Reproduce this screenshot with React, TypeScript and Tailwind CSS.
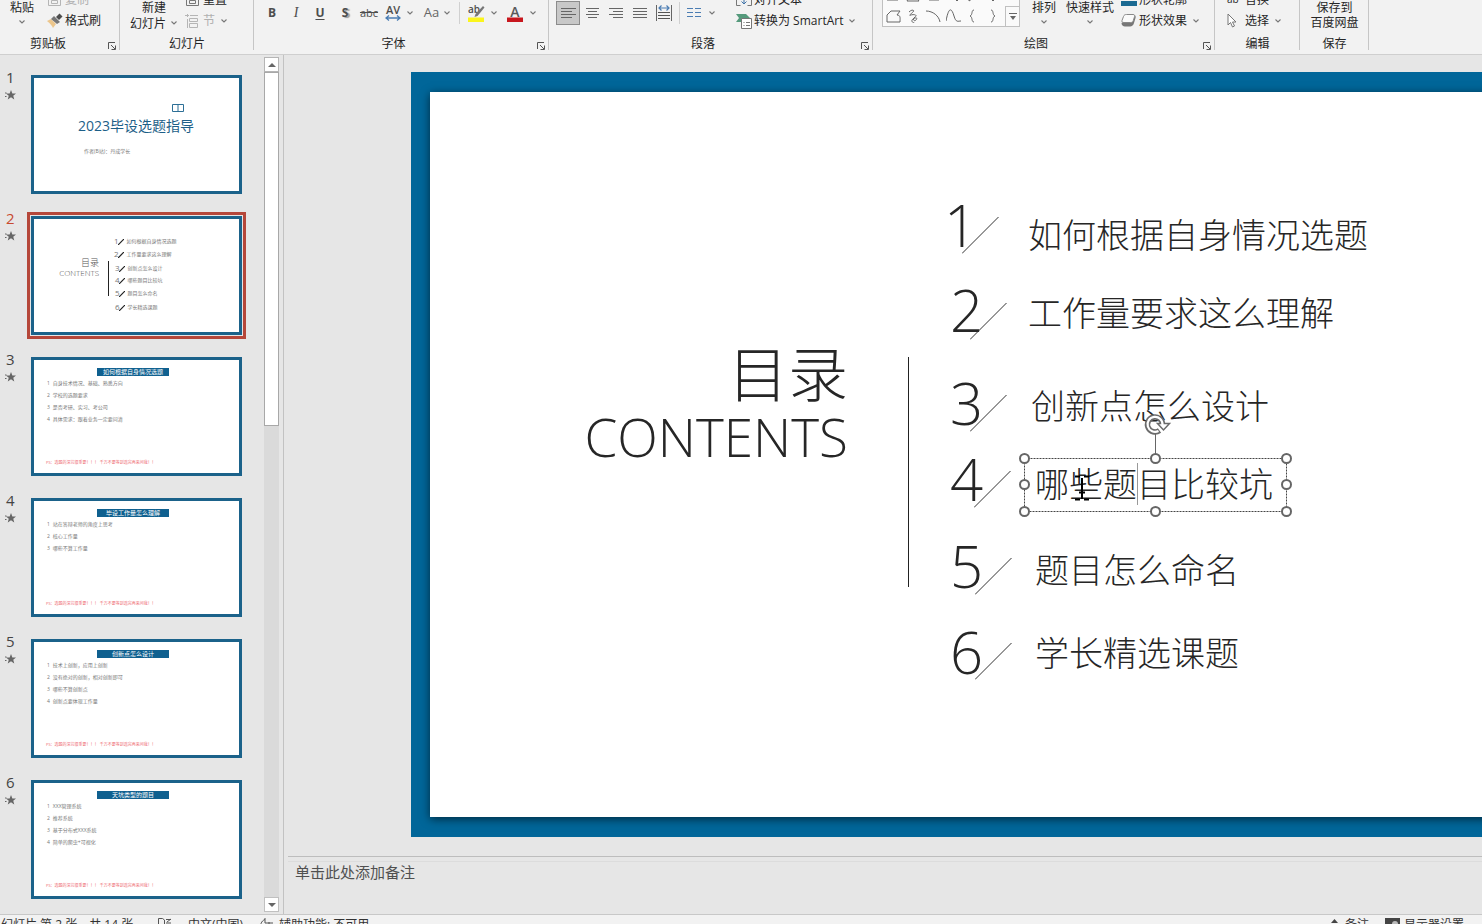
import React from 'react';

const CJK = "font-['Open_Sans','Noto_Sans_CJK_SC',sans-serif]";
const SLIDE_FONT = "font-['Noto_Sans_CJK_SC',sans-serif]";

const WARNING = 'PS：选题的深坑很重要！！！ 千万不要等到选完再来问我！！';

interface ThumbSlide {
  title: string;
  points: string[];
}

const bulletSlides: ThumbSlide[] = [
  {
    title: '如何根据自身情况选题',
    points: ['自身技术情况、基础、熟悉方向', '学校的选题要求', '是否考研、实习、考公司', '具体需求：跟着业务一定要问清'],
  },
  {
    title: '毕设工作量怎么理解',
    points: ['站在答辩老师的角度上思考', '核心工作量', '哪些不算工作量'],
  },
  {
    title: '创新点怎么设计',
    points: ['技术上创新，应用上创新', '没有绝对的创新，相对创新即可', '哪些不算创新点', '创新点要体现工作量'],
  },
  {
    title: '天坑类型的题目',
    points: ['XXX管理系统', '推荐系统', '基于分布式XXX系统', '简单的爬虫+可视化'],
  },
];

const contents = [
  { text: '如何根据自身情况选题', num: 'left-[514px] top-[104px]', slash: 'left-[532px] top-[125px]', label: 'left-[598px] top-[125px]', mini: 'left-[80px] top-[18px]' },
  { text: '工作量要求这么理解', num: 'left-[520px] top-[189px]', slash: 'left-[540px] top-[211px]', label: 'left-[598px] top-[203px]', mini: 'left-[80px] top-[31px]' },
  { text: '创新点怎么设计', num: 'left-[520px] top-[282px]', slash: 'left-[540px] top-[303px]', label: 'left-[601px] top-[296px]', mini: 'left-[81px] top-[45px]' },
  { text: '哪些题目比较坑', num: 'left-[520px] top-[358px]', slash: 'left-[544px] top-[379px]', label: 'left-[605px] top-[374px]', mini: 'left-[81px] top-[57px]' },
  { text: '题目怎么命名', num: 'left-[520px] top-[445px]', slash: 'left-[545px] top-[466px]', label: 'left-[605px] top-[460px]', mini: 'left-[81px] top-[70px]' },
  { text: '学长精选课题', num: 'left-[520px] top-[531px]', slash: 'left-[545px] top-[551px]', label: 'left-[605px] top-[543px]', mini: 'left-[81px] top-[84px]' },
];

const Chevron: React.FC<{ className?: string }> = ({ className = '' }) => (
  <svg width="6" height="4" viewBox="0 0 6 4" className={`shrink-0 ${className}`} fill="none" stroke="#777" strokeWidth="1.1">
    <path d="M.5.5 3 3 5.5.5" />
  </svg>
);

const Launcher: React.FC = () => (
  <button aria-label="更多选项" className="absolute right-1 bottom-1">
    <svg width="8" height="8" viewBox="0 0 8 8" fill="none" stroke="#555" strokeWidth="1">
      <path d="M.5 7V.5H7M3 3l4 4M7.5 3.5v4h-4" />
    </svg>
  </button>
);

interface GroupProps {
  label: string;
  width: string;
  launcher?: boolean;
  children: React.ReactNode;
}

const Group: React.FC<GroupProps> = ({ label, width, launcher, children }) => (
  <section className={`relative flex shrink-0 flex-col justify-end ${width}`}>
    <div className="flex h-[31px] items-end">{children}</div>
    <h2 className="h-[23px] text-center leading-[26px]">{label}</h2>
    {launcher && <Launcher />}
    <div className="absolute top-0 right-0 h-[50px] w-px bg-[#c6c6c6]" />
  </section>
);

const BigButton: React.FC<{ lines: string[]; chevron?: boolean; className?: string }> = ({ lines, chevron, className = '' }) => (
  <button className={`flex h-[31px] flex-col items-center leading-[15px] ${className}`}>
    {lines.map((line) => (
      <span key={line} className="whitespace-nowrap">{line}</span>
    ))}
    {chevron && <Chevron className="mt-[5px]" />}
  </button>
);

const RowButton: React.FC<{ icon: React.ReactNode; text: string; chevron?: boolean; className?: string }> = ({ icon, text, chevron, className = '' }) => (
  <button className={`flex h-[21px] items-center whitespace-nowrap ${className}`}>
    <span className="flex w-[18px] items-center">{icon}</span>
    <span>{text}</span>
    {chevron && <Chevron className="ml-[6px]" />}
  </button>
);

const DocIcon: React.FC<{ color: string }> = ({ color }) => (
  <svg width="15" height="14" viewBox="0 0 15 14" fill="none" stroke={color}>
    <path d="M1.500 1.500v11h12v-11M4.500 7.500h6v3h-6z" />
  </svg>
);

const BrushIcon = () => (
  <svg width="16" height="15" viewBox="0 0 16 15">
    <path d="M0 8l4-2 5 5-3 4c-1-2-3-5-6-7z" fill="#ecc68c" />
    <path d="M4 6l3-3 6 6-3 2z" fill="#777" />
    <path d="M9 4l3.500-3.500 3 3L12 7z" fill="#4d4d4d" />
  </svg>
);

const SectionIcon = () => (
  <svg width="15" height="14" viewBox="0 0 15 14" fill="none" stroke="#b5b5b5">
    <path d="M0 1.500h4M2.500 0v3M5 1.500h8M4.500 4.500h8v3h-8zM4.500 9.500h8v4h-8zM2.500 5v9" />
  </svg>
);

const SmartArtIcon = () => (
  <svg width="16" height="16" viewBox="0 0 16 16">
    <path d="M0 1h10l4 4H6v4H0l3-4z" fill="#559a7c" />
    <path d="M5.500 5.500h10v10h-10z" fill="#fff" stroke="#777" />
    <path d="M7.500 9.500h1M10 9.500h4M7.500 12.500h1M10 12.500h4" stroke="#777" />
  </svg>
);

const AlignTextIcon = () => (
  <svg width="16" height="14" viewBox="0 0 16 14" fill="none" stroke="#777">
    <path d="M4.500 1.500h-4v11h4M11.500 1.500h4v11h-4" />
    <path d="M8 3v8M5.500 8.500 8 11l2.500-2.500" stroke="#3f73a8" />
  </svg>
);

const EffectIcon = () => (
  <svg width="15" height="13" viewBox="0 0 15 13">
    <path d="M13 1c1.500.5 2 1.500 1.500 3l-1.500 5c-.5 2-2 3.500-4 3.500H4C2 12.500.5 11 .5 9z" fill="#777" />
    <path d="M5.500.5h6.500c1.500 0 2 .8 1.600 2l-1.300 4c-.4 1.500-1.300 2-2.800 2H3C1.200 8.500.6 7.800 1 6.500l1.500-4c.5-1.500 1.500-2 3-2z" fill="#fafafa" stroke="#888" />
  </svg>
);

const CursorIcon = () => (
  <svg width="10" height="15" viewBox="0 0 10 15" fill="#fff" stroke="#777">
    <path d="M1 1v11l2.500-2.500L5.500 14l2-1-2-4H9z" />
  </svg>
);

const AlignIcon: React.FC<{ d: string }> = ({ d }) => (
  <svg width="15" height="12" viewBox="0 0 15 12" stroke="#666" fill="none">
    <path d={d} />
  </svg>
);

const aligns = [
  { name: '左对齐', d: 'M0 1.500h15M0 4.500h11M0 7.500h15M0 10.500h11' },
  { name: '居中', d: 'M1 1.500h13M3 4.500h9M1 7.500h13M3 10.500h9' },
  { name: '右对齐', d: 'M0 1.500h14M4 4.500h10M0 7.500h14M4 10.500h10' },
  { name: '两端对齐', d: 'M0 1.500h14M0 4.500h14M0 7.500h14M0 10.500h14' },
];

const FontGroup = () => (
  <div className="mb-[5px] ml-[6px] flex h-[26px] items-center text-[#4d4d4d]">
    <button className="w-6 font-bold">B</button>
    <button className="w-6 font-['Liberation_Serif',serif] text-sm italic">I</button>
    <button className="w-6 font-bold underline underline-offset-2">U</button>
    <button className="w-[26px] font-bold [text-shadow:2px_1px_1px_#999]">S</button>
    <button className="w-[22px] text-[11px] line-through">abc</button>
    <button aria-label="字符间距" className="flex w-[38px] items-center justify-center gap-[5px]">
      <svg width="17" height="17" viewBox="0 0 17 17" fill="none">
        <text x="8" y="9" textAnchor="middle" fontSize="11" fontWeight="600" fill="#4d4d4d">AV</text>
        <path d="M1 13h14M4 10.500 1 13l3 2.500M12 10.500l3 2.500-3 2.500" stroke="#4b7db3" strokeWidth="1.300" />
      </svg>
      <Chevron />
    </button>
    <button className="flex w-[38px] items-center justify-center gap-[5px] text-[13px] text-[#666]">
      Aa
      <Chevron />
    </button>
    <div className="mx-[3px] h-[22px] w-px bg-[#d0d0d0]" />
    <button aria-label="突出显示颜色" className="flex w-[39px] items-center justify-center gap-[6px]">
      <svg width="17" height="18" viewBox="0 0 17 18">
        <text x="0" y="9" fontSize="10" fontWeight="600" fill="#4d4d4d">ab</text>
        <path d="M15 2l1.500 1.500L9.500 12l-3 1 1-3z" fill="#777" />
        <path d="M0 13.500h16V18H0z" fill="#fbf51c" />
      </svg>
      <Chevron />
    </button>
    <button aria-label="字体颜色" className="flex w-[39px] items-center justify-center gap-[6px]">
      <svg width="17" height="18" viewBox="0 0 17 18">
        <text x="8" y="13" textAnchor="middle" fontSize="14" fontWeight="600" fill="#5a5a5a">A</text>
        <path d="M0 13.500h16V18H0z" fill="#c8171e" />
      </svg>
      <Chevron />
    </button>
  </div>
);

const ParagraphGroup = () => (
  <>
    <div className="mb-[5px] ml-[7px] flex h-[26px] items-center">
      {aligns.map((a, i) => (
        <button
          key={a.name}
          aria-label={a.name}
          className={`flex h-6 w-6 items-center justify-center border ${i === 0 ? 'border-[#8c8c8c] bg-[#c8c8c8]' : 'border-transparent'}`}
        >
          <AlignIcon d={a.d} />
        </button>
      ))}
      <button aria-label="分散对齐" className="flex w-6 justify-center">
        <svg width="16" height="16" viewBox="0 0 16 16" fill="none">
          <path d="M.5 0v16M15.500 0v16" stroke="#666" />
          <path d="M3 3h10M5.500.5 3 3l2.500 2.500M10.500.5 13 3l-2.500 2.500" stroke="#4b7db3" strokeWidth="1.200" />
          <path d="M2 7.500h12M2 10.500h12M2 13.500h12" stroke="#555" />
        </svg>
      </button>
      <div className="mx-[3px] h-[22px] w-px bg-[#d0d0d0]" />
      <button aria-label="分栏" className="flex w-9 items-center justify-center gap-2">
        <svg width="14" height="12" viewBox="0 0 14 12" stroke="#4b7db3">
          <path d="M0 1.500h6M8 1.500h6M0 5.500h6M8 5.500h6M0 9.500h6M8 9.500h6" />
        </svg>
        <Chevron />
      </button>
    </div>
    <div className="ml-[17px]">
      <RowButton icon={<AlignTextIcon />} text="对齐文本" />
      <RowButton icon={<SmartArtIcon />} text="转换为 SmartArt" chevron />
    </div>
  </>
);

const shapes = [
  'M1 4v7h11l2-3',
  'M6 3l7 9H1l5-9',
  'M3 3v8h10',
  'M2 7h9v5M8 9l3 3 3-3',
  'M3 3l7 4-7 5z',
  'M1 6l6 6 6-6-6-4z',
  'M1 13V6l4-4h9l-3 4c4 0 3 4 3 7z',
  'M3 3c3-3 6-2 4 0S2 7 5 6s7 0 4 2-1 5 1 3 0-3-3-1 1 5 1 3',
  'M0 2c7 0 13 5 14 11',
  'M0 12C3-4 6 0 8 7s4 5 7 5',
  'M8 1C5 1 7 6 4 7c3 1 1 6 4 6',
  'M5 1c3 0 1 5 4 6-3 1-1 6-4 6',
];

const DrawingGroup = () => (
  <>
    <div className="mb-1 ml-[9px] flex h-12 w-[138px] shrink-0 items-end border border-[#c0c0c0] bg-[#fafafa]">
      <div className="grid shrink-0 grid-cols-[repeat(6,20px)] auto-rows-[20px]">
        {shapes.map((d, i) => (
          <button key={d} aria-label={`形状 ${i + 1}`} className="flex items-center justify-center">
            <svg width="15" height="14" viewBox="0 0 15 14" fill="none" stroke="#666">
              <path d={d} />
            </svg>
          </button>
        ))}
      </div>
      <button aria-label="更多形状" className="ml-auto flex h-5 w-[14px] items-center justify-center border-t border-l border-[#c0c0c0]">
        <svg width="8" height="8" viewBox="0 0 8 8">
          <path d="M0 .5h8" stroke="#666" />
          <path d="M1 3h6L4 7z" fill="#666" />
        </svg>
      </button>
    </div>
    <BigButton lines={['排列']} chevron className="ml-3" />
    <BigButton lines={['快速样式']} chevron className="ml-[10px]" />
    <div className="ml-[7px]">
      <RowButton icon={<span className="mt-[7px] h-[5px] w-4 bg-[#1b6a92]" />} text="形状轮廓" />
      <RowButton icon={<EffectIcon />} text="形状效果" chevron />
    </div>
  </>
);

const Ribbon = () => (
  <header className="flex h-[55px] shrink-0 overflow-hidden border-b border-[#cfcfcf] bg-[#f2f2f2] text-xs text-[#262626]">
    <Group label="剪贴板" width="w-[120px] pr-6" launcher>
      <BigButton lines={['粘贴']} chevron className="ml-[10px]" />
      <div className="ml-[13px]">
        <RowButton icon={<DocIcon color="#b5b5b5" />} text="复制" className="text-[#b0b0b0]" />
        <RowButton icon={<BrushIcon />} text="格式刷" />
      </div>
    </Group>
    <Group label="幻灯片" width="w-[134px]">
      <button className="ml-[10px] grid h-[31px] grid-cols-[36px_6px] items-center gap-x-[5px] leading-[15px]">
        <span className="text-right">新建</span>
        <span />
        <span>幻灯片</span>
        <Chevron />
      </button>
      <div className="ml-[8px]">
        <RowButton icon={<DocIcon color="#777" />} text="重置" />
        <RowButton icon={<SectionIcon />} text="节" chevron className="text-[#b0b0b0]" />
      </div>
    </Group>
    <Group label="字体" width="w-[295px] pr-4" launcher>
      <FontGroup />
    </Group>
    <Group label="段落" width="w-[324px] pr-4" launcher>
      <ParagraphGroup />
    </Group>
    <Group label="绘图" width="w-[342px] pr-4" launcher>
      <DrawingGroup />
    </Group>
    <Group label="编辑" width="w-[85px]">
      <div className="ml-[12px]">
        <RowButton icon={<span className="text-[10px]">ab</span>} text="替换" />
        <RowButton icon={<CursorIcon />} text="选择" chevron />
      </div>
    </Group>
    <Group label="保存" width="w-[69px]">
      <BigButton lines={['保存到', '百度网盘']} className="mx-auto" />
    </Group>
  </header>
);

const CoverThumb = () => (
  <div className="flex h-full flex-col px-[44px] pt-[26px]">
    <svg width="12" height="8" viewBox="0 0 12 8" className="ml-[94px] shrink-0" fill="none" stroke="#2d6f96">
      <path d="M.5.5h11v7H.5zM6 0v8" />
    </svg>
    <p className="mt-[5px] text-sm leading-[18px] whitespace-nowrap text-[#1d5f88]">2023毕设选题指导</p>
    <p className="mt-[12px] ml-[6px] text-[5px] leading-[8px] whitespace-nowrap text-[#777]">作者(B站)：丹成学长</p>
  </div>
);

const ContentsThumb = () => (
  <div className="relative h-full">
    <div className="absolute top-[39px] right-[140px] flex flex-col items-end font-light text-[#555]">
      <span className="text-[9px] leading-[10px]">目录</span>
      <span className="text-[8px] leading-[10px]">CONTENTS</span>
    </div>
    <div className="absolute top-[42px] left-[74px] h-[35px] w-px bg-[#222]" />
    {contents.map((item, i) => (
      <div key={item.text} className={`absolute flex h-2 items-center whitespace-nowrap text-[#777] ${item.mini}`}>
        <span className="text-[8px] leading-[8px]">{i + 1}</span>
        <svg width="6" height="6" viewBox="0 0 6 6" className="mt-[2px] mr-[3px] -ml-px" stroke="#222" strokeWidth="1.200">
          <path d="M0 6 6 0" />
        </svg>
        <span className="text-[5px] leading-[8px]">{item.text}</span>
      </div>
    ))}
  </div>
);

const BulletThumb: React.FC<{ slide: ThumbSlide }> = ({ slide }) => (
  <div className="flex h-full flex-col">
    <p className="mt-2 ml-[63px] h-2 w-[72px] bg-[#0f608f] text-center text-[6px] leading-[8px] text-white">{slide.title}</p>
    <ol className="mt-px ml-[13px] text-[5px] text-[#777]">
      {slide.points.map((point, i) => (
        <li key={point} className="flex h-[12px] items-center gap-[3px] leading-[8px] whitespace-nowrap">
          <span>{i + 1}</span>
          {point}
        </li>
      ))}
    </ol>
    <p className="mt-auto mb-[6px] ml-3 text-[4px] leading-[8px] whitespace-nowrap text-[#ee6a72]">{WARNING}</p>
  </div>
);

const SlideList = () => {
  const thumbs = [<CoverThumb />, <ContentsThumb />, ...bulletSlides.map((s) => <BulletThumb slide={s} />)];
  return (
    <nav aria-label="幻灯片" className="flex w-[284px] shrink-0 border-r border-[#c2c2c2]">
      <ol className="flex flex-1 flex-col gap-[22px] overflow-hidden pt-5">
        {thumbs.map((thumb, i) => {
          const active = i === 1;
          return (
            <li key={i} className="flex shrink-0">
              <div className="flex w-[31px] flex-col pl-[5px]">
                <span className={`pl-px text-[15px] leading-[4px] ${active ? 'text-[#c8492f]' : 'text-[#444]'}`}>{i + 1}</span>
                <svg width="11" height="10" viewBox="0 0 22 20" className="mt-[11px]" fill="#666">
                  <path d="M12 0l2.700 7H22l-5.500 4.500L18.500 19 12 14.500 5.500 19l2-7.500L2 7h7.300zM0 5h3v2H0zM0 12h3v2H0z" />
                </svg>
              </div>
              <button
                aria-label={`幻灯片 ${i + 1}`}
                className={`block h-[119px] w-[211px] overflow-hidden border-3 border-[#1b628a] bg-white text-left ${active ? 'outline-3 outline-offset-1 outline-[#b5473a]' : ''}`}
              >
                {thumb}
              </button>
            </li>
          );
        })}
      </ol>
      <div className="mt-[2px] mr-1 mb-[2px] flex w-[15px] flex-col bg-[#dadada]">
        <button aria-label="向上滚动" className="flex h-[15px] items-center justify-center border border-[#b5b5b5] bg-white">
          <svg width="8" height="4" viewBox="0 0 8 4" fill="#666"><path d="M4 0l4 4H0z" /></svg>
        </button>
        <div className="h-[354px] border border-[#a8a8a8] bg-white" />
        <button aria-label="向下滚动" className="mt-auto flex h-[15px] items-center justify-center border border-[#c0c0c0] bg-white">
          <svg width="8" height="4" viewBox="0 0 8 4" fill="#666"><path d="M0 0h8L4 4z" /></svg>
        </button>
      </div>
    </nav>
  );
};

const Selection = () => (
  <svg width="275" height="106" viewBox="0 0 275 106" className="absolute top-[320px] left-[588px]" fill="none">
    <path d="M6.500 46.500h262v53h-262z" stroke="#444" strokeDasharray="2 1" />
    <path d="M137.500 22v20" stroke="#666" />
    <g stroke="#666" strokeWidth="2" fill="#fff">
      <circle cx="6.500" cy="46.500" r="4.500" />
      <circle cx="137.500" cy="46.500" r="4.500" />
      <circle cx="268.500" cy="46.500" r="4.500" />
      <circle cx="6.500" cy="72.500" r="4.500" />
      <circle cx="268.500" cy="72.500" r="4.500" />
      <circle cx="6.500" cy="99.500" r="4.500" />
      <circle cx="137.500" cy="99.500" r="4.500" />
      <circle cx="268.500" cy="99.500" r="4.500" />
    </g>
    {/* rotate handle: grey outline, then the arrow head, then the white core */}
    <path d="M141.500 18.500a7.500 7.500 0 1 1 3-6.500" stroke="#6b6b6b" strokeWidth="5.500" />
    <path d="M139.500 11.500h12l-6 6.500z" fill="#fff" stroke="#6b6b6b" strokeWidth="1.500" />
    <path d="M140.500 19a7.500 7.500 0 1 1 4-6" stroke="#fff" strokeWidth="2.200" />
    <path d="M119.500 51v42" stroke="#999" />
    <path d="M57 64.500h5M66 64.500h5M57 87.500h5M66 87.500h5M64 66v21M61 80.500h6" stroke="#000" strokeWidth="2" />
  </svg>
);

const Slide = () => (
  <div className={`h-[765px] w-[1360px] shrink-0 border-x-[19px] border-y-[20px] border-[#016699] text-[#262626] ${SLIDE_FONT}`}>
    <div className="relative h-full bg-white shadow-[0_2px_9px_rgba(0,0,0,0.6)]">
      <div className="absolute top-[249px] left-[118px] flex w-[300px] flex-col items-end">
        <h1 className="text-[60px] leading-[60px] font-light">目录</h1>
        <p className="mt-[3px] font-['Open_Sans',sans-serif] text-[53px] leading-[66px] font-light">CONTENTS</p>
      </div>
      <div className="absolute top-[265px] left-[478px] h-[230px] w-px bg-[#222]" />
      {contents.map((item, i) => (
        <React.Fragment key={item.text}>
          <span className={`absolute font-['Open_Sans',sans-serif] text-[58px] leading-[58px] font-light ${item.num}`}>{i + 1}</span>
          <svg width="37" height="37" viewBox="0 0 37 37" className={`absolute ${item.slash}`} stroke="#333">
            <path d="M0 36.500 36.500 0" />
          </svg>
          <p className={`absolute text-[34px] leading-[34px] font-light whitespace-nowrap ${item.label}`}>{item.text}</p>
        </React.Fragment>
      ))}
      <Selection />
    </div>
  </div>
);

const StatusBar = () => (
  <footer className="flex h-[10px] shrink-0 items-start overflow-hidden border-t border-[#c8c8c8] bg-[#f2f2f2] pt-[3px] pr-[18px] pl-px text-xs leading-[14px] whitespace-nowrap text-[#333]">
    <span className="w-[157px]">幻灯片 第 2 张，共 14 张</span>
    <svg width="14" height="12" viewBox="0 0 14 12" fill="none" stroke="#555" className="mr-4">
      <path d="M.5.500h4L6.500 2v9M.5.500V10h6M8 1.500h5M9 4l4-3M8 5h5" />
    </svg>
    <span className="w-[72px]">中文(中国)</span>
    <svg width="14" height="12" viewBox="0 0 14 12" fill="none" stroke="#555" className="mr-[5px]">
      <path d="M5 0v5h8M5 1.500C1 3 0 7 1 11M9 4v8" />
    </svg>
    <span>辅助功能: 不可用</span>
    <button className="ml-auto flex gap-[6px]">
      <svg width="9" height="12" viewBox="0 0 9 12" fill="#444"><path d="M4.500 1 8 5H1zM0 7h9v1H0z" /></svg>
      备注
    </button>
    <button className="ml-4 flex gap-1">
      <svg width="15" height="12" viewBox="0 0 15 12"><path d="M0 0h15v11H0z" fill="#444" /><circle cx="10" cy="6" r="3" fill="#bbb" /></svg>
      显示器设置
    </button>
  </footer>
);

const App: React.FC = () => (
  <div className={`flex h-screen flex-col overflow-hidden bg-[#e6e6e6] ${CJK}`}>
    <Ribbon />
    <div className="flex min-h-0 flex-1">
      <SlideList />
      <main className="flex min-w-0 flex-1 flex-col pl-1">
        <div className="flex min-h-0 flex-1 overflow-hidden pt-[17px] pl-[123px]">
          <Slide />
        </div>
        <div className="h-[58px] shrink-0 border-t border-[#bdbdbd] pt-1">
          <div className="border-t border-[#dcdcdc] px-[7px] text-[15px] leading-5 text-[#505050]">单击此处添加备注</div>
        </div>
      </main>
    </div>
    <StatusBar />
  </div>
);

export default App;
